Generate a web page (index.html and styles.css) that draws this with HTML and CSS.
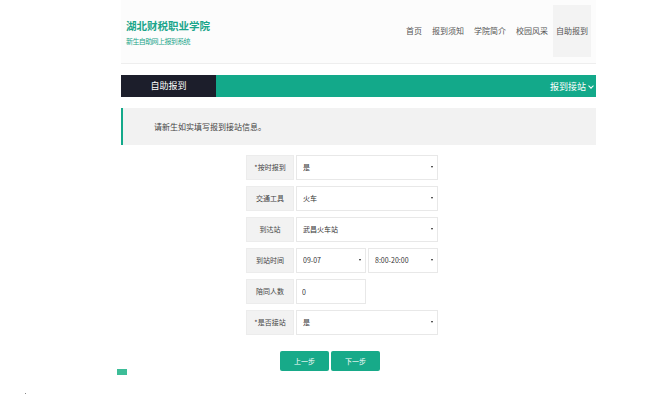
FILE: index.html
```html
<!DOCTYPE html>
<html lang="zh-CN">
<head>
  <meta charset="UTF-8" />
  <meta name="viewport" content="width=device-width, initial-scale=1.0" />
  <title>湖北财税职业学院 – 新生自助网上报到系统</title>
  <link rel="stylesheet" href="styles.css">
</head>
<body>
  <div class="wrap">
    <div class="header">
      <div class="logo">
        <div class="logo-title">湖北财税职业学院</div>
        <div class="logo-sub">新生自助网上报到系统</div>
      </div>
      <ul class="nav">
        <li>首页</li>
        <li>报到须知</li>
        <li>学院简介</li>
        <li>校园风采</li>
        <li class="active">自助报到</li>
      </ul>
    </div>

    <div class="bar">
      <div class="bar-title">自助报到</div>
      <div class="bar-menu">报到接站 <span class="chev"></span></div>
    </div>

    <div class="info">请新生如实填写报到接站信息。</div>

    <form class="form">
      <div class="row">
        <label class="lbl">*按时报到</label>
        <div class="sel wide"><select><option>是</option></select></div>
      </div>
      <div class="row">
        <label class="lbl">交通工具</label>
        <div class="sel wide"><select><option>火车</option></select></div>
      </div>
      <div class="row">
        <label class="lbl">到达站</label>
        <div class="sel wide"><select><option>武昌火车站</option></select></div>
      </div>
      <div class="row">
        <label class="lbl">到站时间</label>
        <div class="sel half"><select><option>09-07</option></select></div>
        <div class="sel half"><select><option>8:00-20:00</option></select></div>
      </div>
      <div class="row">
        <label class="lbl">陪同人数</label>
        <input class="num" type="text" value="0">
      </div>
      <div class="row">
        <label class="lbl">*是否接站</label>
        <div class="sel wide"><select><option>是</option></select></div>
      </div>

      <div class="buttons">
        <button type="button">上一步</button>
        <button type="button">下一步</button>
      </div>
    </form>

    <div class="totop"></div>
  </div>
  <div class="dot"></div>
</body>
</html>
```

FILE: styles.css
```css
body {
  margin: 0;
  font-family: "Noto Sans CJK SC", "Noto Sans", sans-serif;
  background-color: #fff;
  color: #333;
}

.wrap {
  width: 475px;
  margin-left: 121px;
}

.header {
  display: flex;
  justify-content: space-between;
  height: 63px;
  border-bottom: 1px solid #eeeeee;
  background-color: #fcfcfc;
}

.logo {
  padding: 18px 0 0 5px;
}

.logo-title {
  font-size: 10.5px;
  font-weight: bold;
  color: #1aa58a;
  line-height: 15px;
}

.logo-sub {
  font-size: 7px;
  color: #1aa58a;
  margin-top: 3px;
  line-height: 10px;
  letter-spacing: -0.6px;
}

.nav {
  display: flex;
  list-style: none;
  margin: 5px 5px 0 0;
  padding: 0;
  height: 52px;
}

.nav li {
  font-size: 8px;
  color: #555;
  padding: 0 5px;
  line-height: 52px;
}

.nav li.active {
  background-color: #f3f3f3;
  padding: 0 3px;
}

.bar {
  display: flex;
  justify-content: space-between;
  align-items: center;
  height: 22px;
  margin-top: 11px;
  background-color: #13a98a;
}

.bar-title {
  width: 95px;
  height: 22px;
  line-height: 22px;
  background-color: #1c1e2b;
  color: #fff;
  font-size: 9px;
  text-align: center;
}

.bar-menu {
  color: #fff;
  font-size: 9px;
  padding-right: 3px;
}

.chev {
  display: inline-block;
  width: 3px;
  height: 3px;
  border-right: 1px solid #fff;
  border-bottom: 1px solid #fff;
  transform: rotate(45deg);
  margin: 0 0 2px 1px;
}

.info {
  margin-top: 11px;
  height: 37px;
  line-height: 37px;
  background-color: #f2f2f2;
  border-left: 2px solid #13a98a;
  padding-left: 31px;
  font-size: 8px;
  color: #444;
}

.form {
  margin: 10px 0 0 125px;
  width: 192px;
}

.row {
  display: flex;
  gap: 2px;
  height: 25px;
  margin-bottom: 6px;
}

.lbl {
  width: 48px;
  background-color: #f2f2f2;
  border: 1px solid #ececec;
  box-sizing: border-box;
  font-size: 7px;
  color: #444;
  line-height: 23px;
  text-align: center;
}

.sel {
  position: relative;
  box-sizing: border-box;
  border: 1px solid #e8e8e8;
  background-color: #fff;
}

.sel.wide {
  width: 142px;
}

.sel.half {
  width: 70px;
}

.sel select {
  display: block;
  appearance: none;
  border: none;
  background: transparent;
  width: 100%;
  height: 23px;
  line-height: 23px;
  padding: 0 0 0 6px;
  margin: 0;
  font-family: inherit;
  font-size: 7px;
  color: #333;
  outline: none;
}

.sel::after {
  content: "";
  position: absolute;
  right: 4px;
  top: 10px;
  border-left: 1.5px solid transparent;
  border-right: 1.5px solid transparent;
  border-top: 2.5px solid #222;
}

.num {
  width: 70px;
  box-sizing: border-box;
  border: 1px solid #e8e8e8;
  padding: 0 0 0 5px;
  margin: 0;
  font-family: inherit;
  font-size: 7px;
  color: #333;
  outline: none;
}

.buttons {
  display: flex;
  gap: 2px;
  margin: 16px 0 0 34px;
}

.buttons button {
  width: 49px;
  height: 20px;
  border: none;
  border-radius: 2px;
  background-color: #17aa89;
  color: #fff;
  font-family: inherit;
  font-size: 7px;
  cursor: pointer;
}

.totop {
  width: 10px;
  height: 6px;
  margin: -2px 0 0 -4px;
  background-color: #3dbd98;
}

.dot {
  width: 1px;
  height: 1px;
  margin: 18px 0 0 25px;
  background-color: #888;
}
```
